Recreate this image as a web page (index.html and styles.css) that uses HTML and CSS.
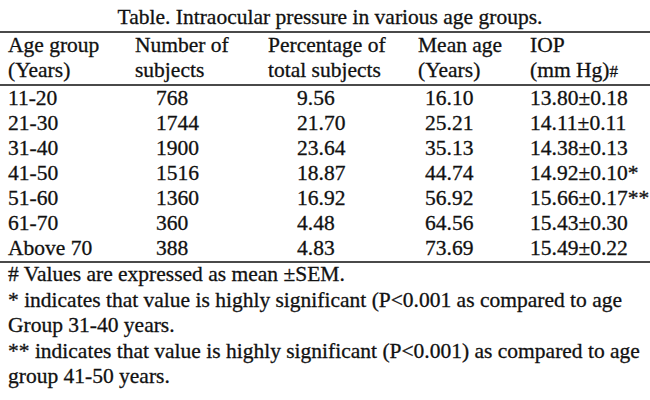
FILE: index.html
```html
<!DOCTYPE html>
<html lang="en">
<head>
<meta charset="utf-8">
<title>Intraocular pressure table</title>
<link rel="stylesheet" href="styles.css">
</head>
<body>
<div class="page">
  <table class="iop">
    <caption class="title">Table. Intraocular pressure in various age groups.</caption>
    <colgroup>
      <col class="w1"><col class="w2"><col class="w3"><col class="w4"><col class="w5">
    </colgroup>
    <thead>
      <tr>
        <th>Age group<br>(Years)</th>
        <th>Number of<br>subjects</th>
        <th>Percentage of<br>total subjects</th>
        <th>Mean age<br>(Years)</th>
        <th>IOP<br>(mm Hg)<span class="hash">#</span></th>
      </tr>
    </thead>
    <tbody>
      <tr><td class="c1">11-20</td><td class="c2">768</td><td class="c3">9.56</td><td class="c4">16.10</td><td class="c5">13.80±0.18</td></tr>
      <tr><td class="c1">21-30</td><td class="c2">1744</td><td class="c3">21.70</td><td class="c4">25.21</td><td class="c5">14.11±0.11</td></tr>
      <tr><td class="c1">31-40</td><td class="c2">1900</td><td class="c3">23.64</td><td class="c4">35.13</td><td class="c5">14.38±0.13</td></tr>
      <tr><td class="c1">41-50</td><td class="c2">1516</td><td class="c3">18.87</td><td class="c4">44.74</td><td class="c5">14.92±0.10*</td></tr>
      <tr><td class="c1">51-60</td><td class="c2">1360</td><td class="c3">16.92</td><td class="c4">56.92</td><td class="c5">15.66±0.17**</td></tr>
      <tr><td class="c1">61-70</td><td class="c2">360</td><td class="c3">4.48</td><td class="c4">64.56</td><td class="c5">15.43±0.30</td></tr>
      <tr><td class="c1">Above 70</td><td class="c2">388</td><td class="c3">4.83</td><td class="c4">73.69</td><td class="c5">15.49±0.22</td></tr>
    </tbody>
  </table>
  <div class="notes">
    <p># Values are expressed as mean ±SEM.</p>
    <p>* indicates that value is highly significant (P&lt;0.001 as compared to age<br>Group 31-40 years.</p>
    <p>** indicates that value is highly significant (P&lt;0.001) as compared to age<br>group 41-50 years.</p>
  </div>
</div>
</body>
</html>
```

FILE: styles.css
```css
html, body {
  margin: 0;
  padding: 0;
  background: #ffffff;
}

.page {
  width: 650px;
  height: 400px;
  overflow: hidden;
  font-family: "Liberation Serif", "Times New Roman", serif;
  font-size: 21.5px;
  color: #111111;
  -webkit-text-stroke: 0.3px #111111;
}

.iop {
  width: 650px;
  border-collapse: collapse;
  table-layout: fixed;
}

.title {
  caption-side: top;
  text-align: center;
  line-height: 25px;
  padding: 5px 0 1px 10px;
  white-space: nowrap;
}

.w1 { width: 127px; }
.w2 { width: 133px; }
.w3 { width: 150px; }
.w4 { width: 112px; }
.w5 { width: 128px; }

.iop thead tr {
  border-top: 2px solid #4a4a4a;
  border-bottom: 2px solid #4a4a4a;
}

.iop tbody tr:last-child {
  border-bottom: 2px solid #4a4a4a;
}

.iop th {
  font-weight: normal;
  text-align: left;
  line-height: 25px;
  padding: 0 0 0 8px;
  white-space: nowrap;
  vertical-align: top;
}

.iop td {
  line-height: 25px;
  padding: 0;
  white-space: nowrap;
}

.c1 { padding-left: 8px !important; }
.c2 { padding-left: 29px !important; }
.c3 { padding-left: 37px !important; }
.c4 { padding-left: 15px !important; }
.c5 { padding-left: 8px !important; }

.hash {
  font-size: 17px;
}

.notes {
  padding-left: 8px;
  margin-top: -1px;
}

.notes p {
  margin: 0;
  line-height: 25.5px;
  white-space: nowrap;
}
```
